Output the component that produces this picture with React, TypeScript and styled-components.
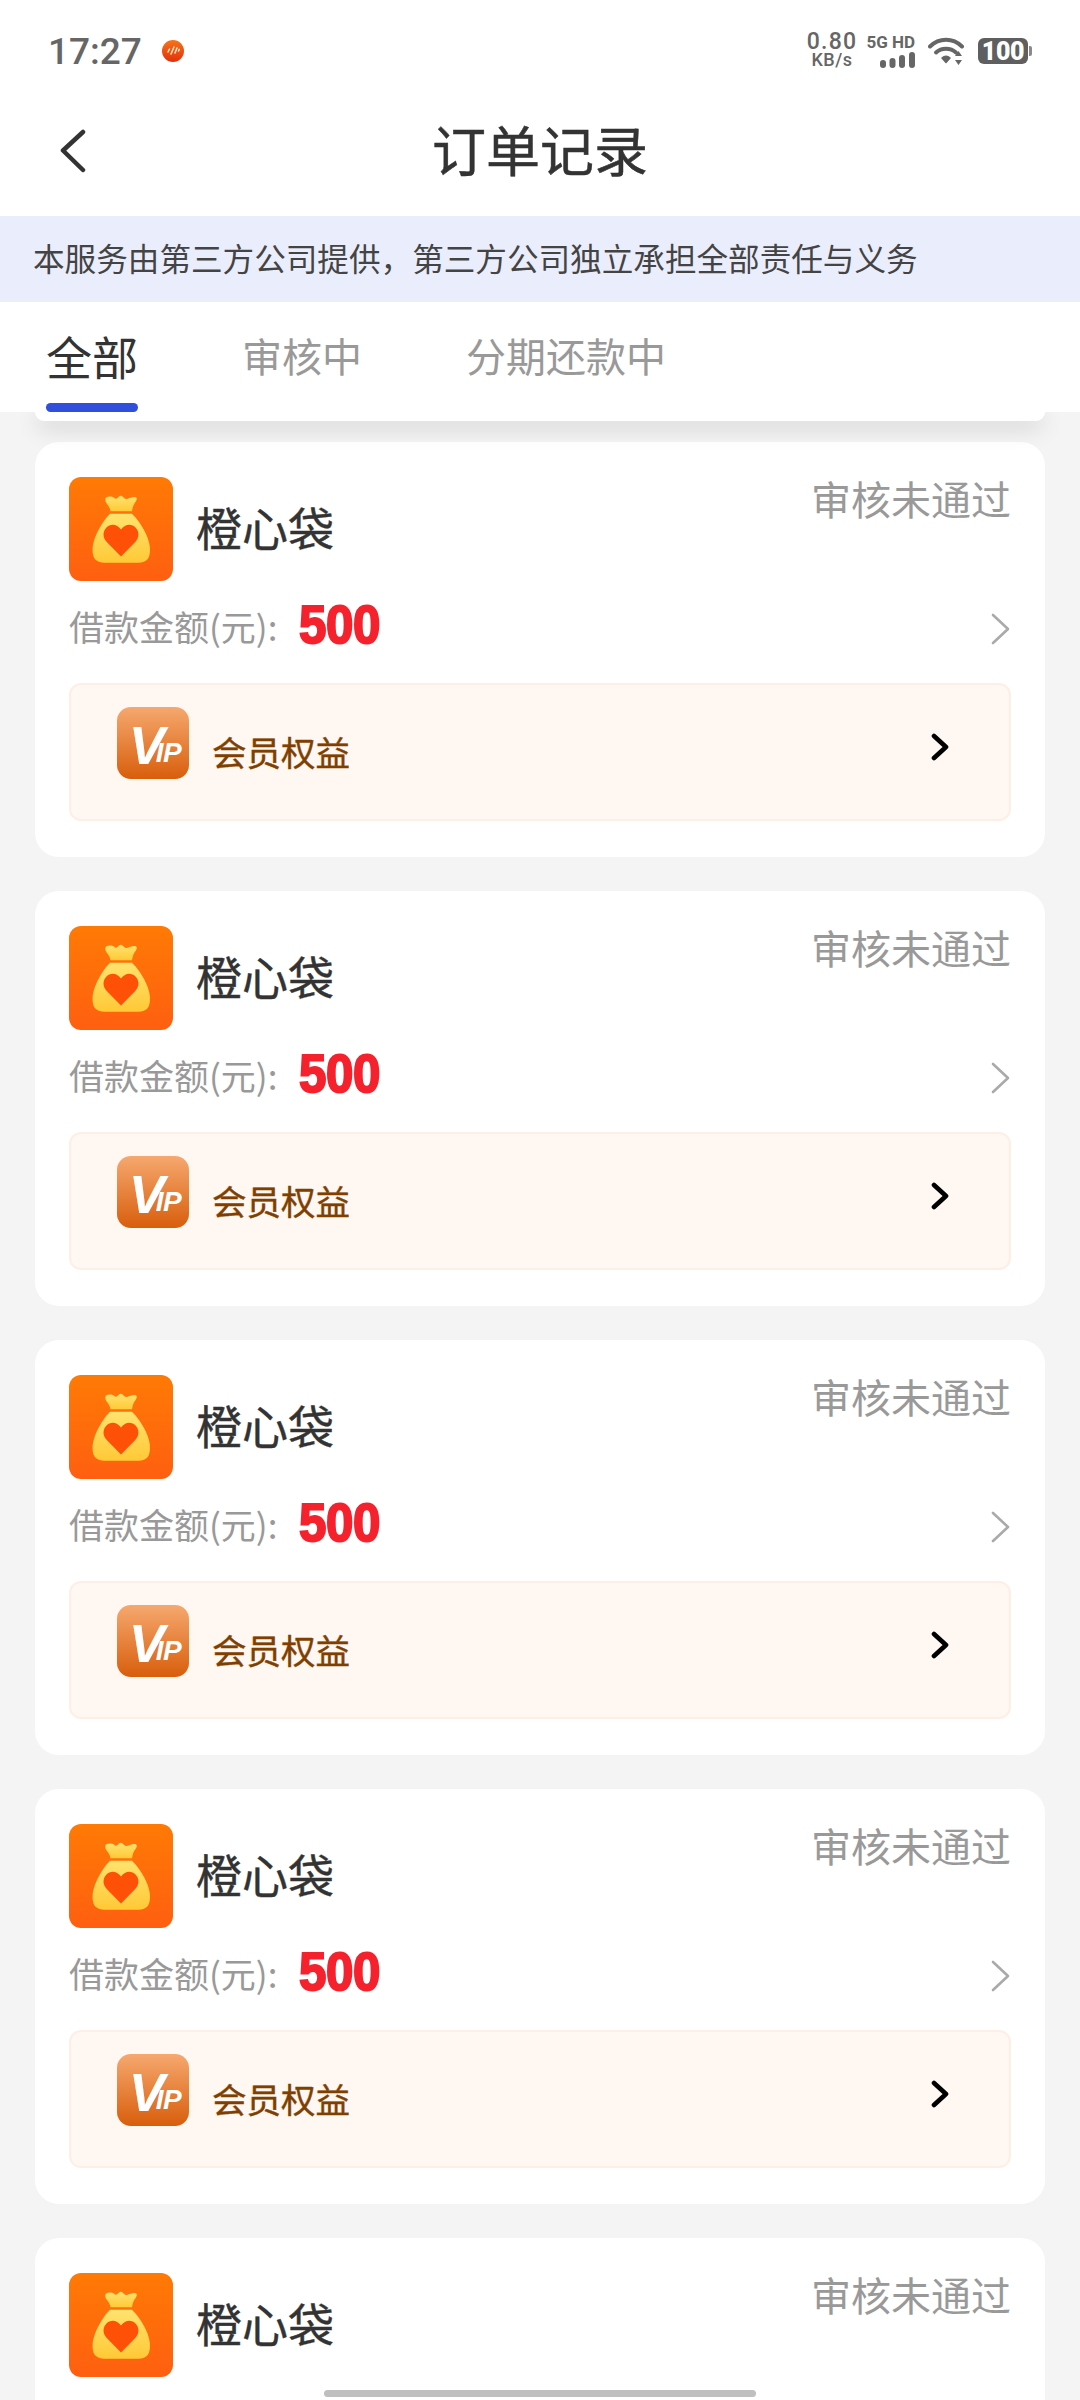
import React from "react";
import styled, { createGlobalStyle } from "styled-components";

const GlobalStyle = createGlobalStyle`
  html, body {
    margin: 0;
    padding: 0;
    background: #f4f4f4;
  }
  * {
    box-sizing: border-box;
  }
`;

const Page = styled.div`
  position: relative;
  width: 1080px;
  height: 2400px;
  overflow: hidden;
  background: #f4f4f4;
  font-family: "Noto Sans CJK SC", "Noto Sans", sans-serif;
`;

const StatusBar = styled.div`
  display: flex;
  align-items: center;
  justify-content: space-between;
  height: 90px;
  padding: 12px 48px 0 48px;
  background: #fff;
  color: #666;
`;

const StatusLeft = styled.div`
  display: flex;
  align-items: center;
  gap: 20px;
`;

const Clock = styled.span`
  font-family: Roboto, sans-serif;
  font-size: 37px;
  font-weight: 500;
`;

const StatusRight = styled.div`
  display: flex;
  align-items: center;
`;

const Speed = styled.div`
  display: flex;
  flex-direction: column;
  align-items: center;
  width: 50px;
  font-family: Roboto, sans-serif;
  font-weight: 500;
  line-height: 18px;
`;

const SpeedValue = styled.span`
  font-size: 23px;
  letter-spacing: 1.2px;
`;

const SpeedUnit = styled.span`
  font-size: 18px;
  letter-spacing: 0.5px;
`;

const Network = styled.div`
  display: flex;
  flex-direction: column;
  align-items: flex-end;
  width: 48px;
  margin-left: 10px;
  gap: 3px;
`;

const NetworkLabel = styled.span`
  font-family: Roboto, sans-serif;
  font-size: 17px;
  font-weight: 700;
  line-height: 14px;
  white-space: nowrap;
`;

const Battery = styled.div`
  position: relative;
  display: flex;
  align-items: center;
  justify-content: center;
  width: 50px;
  height: 26px;
  margin-left: 12px;
  margin-right: 4px;
  border-radius: 6px;
  background: #5f5f5f;
  color: #fff;
  font-family: Roboto, sans-serif;
  font-size: 25px;
  font-weight: 900;
  letter-spacing: -0.3px;

  &::after {
    content: "";
    position: absolute;
    right: -4px;
    top: 8px;
    width: 3px;
    height: 10px;
    border-radius: 0 2px 2px 0;
    background: #8a8a8a;
  }
`;

const NavBar = styled.div`
  position: relative;
  display: flex;
  align-items: center;
  justify-content: center;
  height: 126px;
  padding-bottom: 10px;
  background: #fff;
`;

const BackIcon = styled.svg`
  position: absolute;
  left: 58px;
  top: 39px;
`;

const NavTitle = styled.h1`
  margin: 0;
  color: #333;
  font-size: 54px;
  font-weight: 400;
  -webkit-text-stroke: 0.5px #333;
`;

const Notice = styled.div`
  display: flex;
  align-items: center;
  height: 86px;
  padding: 0 33px 4px;
  background: #eaeefc;
  color: #444;
  font-size: 31.6px;
  white-space: nowrap;
`;

const TabBar = styled.div`
  position: relative;
  z-index: 2;
  display: flex;
  gap: 104px;
  height: 110px;
  padding-left: 46px;
  background: #fff;

  &::after {
    content: "";
    position: absolute;
    left: 35px;
    right: 35px;
    top: 100%;
    height: 9px;
    border-radius: 0 0 16px 16px;
    background: #fff;
    box-shadow: 0 6px 22px rgba(0, 0, 0, 0.2);
    clip-path: inset(0 -50px -50px -50px);
  }
`;

const Tab = styled.div<{ $active?: boolean }>`
  position: relative;
  padding-top: 25px;
  color: ${(p) => (p.$active ? "#333" : "#999")};
  font-size: ${(p) => (p.$active ? "46px" : "40px")};
  line-height: 56px;
  white-space: nowrap;

  &::after {
    content: "";
    display: ${(p) => (p.$active ? "block" : "none")};
    position: absolute;
    left: 0;
    right: 0;
    bottom: 0;
    height: 9px;
    border-radius: 5px;
    background: #2f4fdc;
  }
`;

const OrderList = styled.div`
  display: flex;
  flex-direction: column;
  gap: 34px;
  padding: 30px 35px 0;
`;

const Card = styled.div`
  flex-shrink: 0;
  height: 415px;
  padding: 35px 34px 0;
  border-radius: 24px;
  background: #fff;
`;

const CardHead = styled.div`
  display: flex;
  align-items: center;
`;

const BrandIcon = styled.svg`
  flex-shrink: 0;
`;

const BrandName = styled.span`
  margin: 0 0 6px 23px;
  color: #333;
  font-size: 46px;
  font-weight: 400;
  -webkit-text-stroke: 0.4px #333;
`;

const StatusText = styled.span`
  align-self: flex-start;
  margin: -8px 0 0 auto;
  color: #999;
  font-size: 40px;
  line-height: 58px;
`;

const AmountRow = styled.div`
  display: flex;
  align-items: center;
  justify-content: space-between;
  height: 58px;
  margin-top: 19px;
`;

const AmountLabel = styled.span`
  margin-bottom: 8px;
  color: #999;
  font-size: 35px;
`;

const AmountValue = styled.span`
  margin: 0 0 10px 22px;
  color: #f5222d;
  font-family: "Liberation Sans", Arial, sans-serif;
  font-size: 53px;
  font-weight: 700;
  letter-spacing: -0.5px;
  -webkit-text-stroke: 2px #f5222d;
  transform: scaleX(0.93);
  transform-origin: left center;
`;

const AmountInfo = styled.div`
  display: flex;
  align-items: center;
`;

const MemberBox = styled.div`
  display: flex;
  align-items: center;
  height: 138px;
  margin-top: 25px;
  padding: 0 60px 0 46px;
  border: 2px solid #fdefe6;
  border-radius: 12px;
  background: #fff7f2;
`;

const VipBadge = styled.div`
  display: flex;
  align-items: flex-end;
  justify-content: center;
  flex-shrink: 0;
  width: 72px;
  height: 72px;
  margin-bottom: 18px;
  padding: 0 0 7px 4px;
  border-radius: 14px;
  background: linear-gradient(180deg, #f6a86f 0%, #d85e0c 100%);
  color: #fff;
  font-family: "Liberation Sans", Arial, sans-serif;
  font-style: italic;
  font-weight: 700;
`;

const VipLarge = styled.span`
  font-size: 54px;
  line-height: 54px;
  margin-right: -9px;
`;

const VipSmall = styled.span`
  font-size: 28px;
  line-height: 38px;
  letter-spacing: -0.5px;
`;

const MemberText = styled.span`
  margin: 0 0 3px 23px;
  color: #7f3f00;
  font-size: 34.5px;
  font-weight: 400;
  -webkit-text-stroke: 0.4px #7f3f00;
`;

const MemberArrow = styled.svg`
  margin-left: auto;
  margin-bottom: 10px;
`;

const HomeIndicator = styled.div`
  position: absolute;
  left: 324px;
  bottom: 3px;
  width: 432px;
  height: 7px;
  border-radius: 4px;
  background: #bfbfbf;
`;

function RecordDot() {
  return (
    <svg width="22" height="22" viewBox="0 0 22 22">
      <defs>
        <linearGradient id="dotFill" x1="0" y1="0" x2="0" y2="1">
          <stop offset="0" stopColor="#f7741a" />
          <stop offset="1" stopColor="#e2300c" />
        </linearGradient>
      </defs>
      <circle cx="11" cy="11" r="11" fill="url(#dotFill)" />
      <path d="M6 12l1.500-3M9 14l3-7M13 13l2-5M16.500 11l.8-1.600" stroke="#ffe9c9" strokeWidth="1.500" strokeLinecap="round" />
    </svg>
  );
}

function SignalBars() {
  return (
    <svg width="35" height="16" viewBox="0 0 35 16" fill="#666">
      <rect x="0" y="8" width="6" height="8" rx="3" />
      <rect x="9.500" y="6" width="6" height="10" rx="3" />
      <rect x="19" y="3" width="6" height="13" rx="3" />
      <rect x="29" y="0" width="6" height="16" rx="3" />
    </svg>
  );
}

function WifiIcon() {
  return (
    <svg width="38" height="30" viewBox="0 0 38 30" style={{ marginLeft: 13 }}>
      <g fill="none" stroke="#666" strokeWidth="4" strokeLinecap="round">
        <path d="M2 10.500C11 1.500 25 1.500 34 10.500" />
        <path d="M8 16.500C13.500 11.500 22.500 11.500 28 16.500" />
      </g>
      <path d="M14 22c2.500-2.500 5.500-2.500 8 0l-4 4.500z" fill="#666" stroke="#666" strokeWidth="1.500" strokeLinejoin="round" />
      <path d="M30.500 15l3.500 5h-7zM30.500 29l-3.500-5h7z" fill="#666" />
    </svg>
  );
}

function BackArrow() {
  return (
    <BackIcon width="28" height="44" viewBox="0 0 28 44">
      <path d="M25 3L5 21.500 25 41" fill="none" stroke="#333" strokeWidth="4.500" strokeLinecap="round" strokeLinejoin="round" />
    </BackIcon>
  );
}

function BagIcon({ id }: { id: string }) {
  return (
    <BrandIcon width="104" height="104" viewBox="0 0 104 102" preserveAspectRatio="none">
      <defs>
        <linearGradient id={`${id}-bg`} x1="0" y1="0" x2="0" y2="1">
          <stop offset="0" stopColor="#ff7a05" />
          <stop offset="1" stopColor="#ff5f10" />
        </linearGradient>
        <linearGradient id={`${id}-bag`} x1="0" y1="0" x2="0" y2="1">
          <stop offset="0" stopColor="#ffe36e" />
          <stop offset="1" stopColor="#ffc937" />
        </linearGradient>
      </defs>
      <rect width="104" height="102" rx="12" fill={`url(#${id}-bg)`} />
      <path
        d="M37 20c3-1.500 7-1 9 1 2.500 1.500 3.500-3 6-2.500 2.500.5 3 3.500 6 3 3-.5 6-2.500 9-1.500 2 1 0 4-1.500 6-1.500 2-2 5-2.500 7.500H41.500c-.5-3-2-5-3.500-7-1.500-2-2.500-5-1-6.500z"
        fill={`url(#${id}-bag)`}
      />
      <path
        d="M41 36h22c4 4 10 11 14 20 4 9 5 16 3 22-1.500 4-5 6-10 6H35c-5 0-9-2-10.500-6-2-6-1-13 3-22 4-9 9.500-16 13.500-20z"
        fill={`url(#${id}-bag)`}
      />
      <path
        d="M52 78L38 64c-5-5-4-11-.5-14.500 4-4 10.500-3.500 14.500 2 4-5.500 10.500-6 14.500-2C70 53 71 59 66 64z"
        fill="#ff5008"
      />
    </BrandIcon>
  );
}

const orders = ["a", "b", "c", "d", "e"];

export default function App() {
  return (
    <Page>
      <GlobalStyle />
      <StatusBar>
        <StatusLeft>
          <Clock>17:27</Clock>
          <RecordDot />
        </StatusLeft>
        <StatusRight>
          <Speed>
            <SpeedValue>0.80</SpeedValue>
            <SpeedUnit>KB/s</SpeedUnit>
          </Speed>
          <Network>
            <NetworkLabel>5G HD</NetworkLabel>
            <SignalBars />
          </Network>
          <WifiIcon />
          <Battery>100</Battery>
        </StatusRight>
      </StatusBar>
      <NavBar>
        <BackArrow />
        <NavTitle>订单记录</NavTitle>
      </NavBar>
      <Notice>本服务由第三方公司提供，第三方公司独立承担全部责任与义务</Notice>
      <TabBar>
        <Tab $active>全部</Tab>
        <Tab>审核中</Tab>
        <Tab>分期还款中</Tab>
      </TabBar>
      <OrderList>
        {orders.map((id) => (
          <Card key={id}>
            <CardHead>
              <BagIcon id={id} />
              <BrandName>橙心袋</BrandName>
              <StatusText>审核未通过</StatusText>
            </CardHead>
            <AmountRow>
              <AmountInfo>
                <AmountLabel>借款金额(元):</AmountLabel>
                <AmountValue>500</AmountValue>
              </AmountInfo>
              <svg width="20" height="32" viewBox="0 0 20 32">
                <path d="M2 2l15 14L2 30" fill="none" stroke="#aaa" strokeWidth="2.600" strokeLinecap="round" strokeLinejoin="round" />
              </svg>
            </AmountRow>
            <MemberBox>
              <VipBadge>
                <VipLarge>V</VipLarge>
                <VipSmall>IP</VipSmall>
              </VipBadge>
              <MemberText>会员权益</MemberText>
              <MemberArrow width="18" height="28" viewBox="0 0 18 28">
                <path d="M3 3l12 11L3 25" fill="none" stroke="#000" strokeWidth="4.600" strokeLinecap="round" strokeLinejoin="round" />
              </MemberArrow>
            </MemberBox>
          </Card>
        ))}
      </OrderList>
      <HomeIndicator />
    </Page>
  );
}
